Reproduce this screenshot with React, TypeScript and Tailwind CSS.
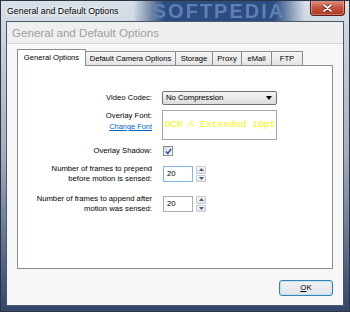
import React from "react";

const F = "font-['Liberation_Sans',Arial,sans-serif]";

function Tab({ label, w, selected }: { label: string; w: number; selected?: boolean }) {
  if (selected) {
    return (
      <div
        className="relative z-10 -mb-px flex h-[17px] items-start justify-center border border-b-0 border-[#898c95] bg-white pt-[3px] text-[7.6px] leading-[10px] text-black"
        style={{ width: w }}
      >
        {label}
      </div>
    );
  }
  return (
    <div
      className="-ml-px flex h-[14px] items-center justify-center border border-b-0 border-[#898c95] bg-gradient-to-b from-[#f6f6f6] to-[#e4e4e4] text-[7.6px] leading-[10px] text-black"
      style={{ width: w }}
    >
      {label}
    </div>
  );
}

function Spinner() {
  return (
    <div className="ml-[3px] flex h-[16px] w-[10px] flex-col gap-px">
      <div className="flex flex-1 items-center justify-center rounded-[1px] border border-[#c5c9d0] bg-gradient-to-b from-[#f7f7f7] to-[#e3e6ea]">
        <svg width="5" height="3" viewBox="0 0 5 3">
          <path d="M2.5 0 L5 3 L0 3 Z" fill="#4a5f7d" />
        </svg>
      </div>
      <div className="flex flex-1 items-center justify-center rounded-[1px] border border-[#c5c9d0] bg-gradient-to-b from-[#f7f7f7] to-[#e3e6ea]">
        <svg width="5" height="3" viewBox="0 0 5 3">
          <path d="M0 0 L5 0 L2.5 3 Z" fill="#4a5f7d" />
        </svg>
      </div>
    </div>
  );
}

export default function App() {
  return (
    <div
      className={`${F} relative flex h-[312px] w-[350px] flex-col overflow-hidden border border-[#2a3446] bg-gradient-to-b from-[#d8e0e8] via-[#a2adbb] to-[#34456a]`}
    >
      {/* Title bar */}
      <div className="relative flex h-[20px] items-start">
        <div className="pointer-events-none absolute left-[132px] top-0 flex h-[20px] w-[172px] items-center justify-center bg-[linear-gradient(to_right,rgba(40,74,126,0),#2d4c80_18%,#2d4c80_82%,rgba(40,74,126,0))]">
          <span className="text-[20px] font-bold leading-[20px] tracking-[2px] text-[#5e80b4] blur-[0.5px]">
            SOFTPEDIA
          </span>
        </div>
        <span className="relative ml-[6px] mt-[5px] text-[8.8px] leading-[11px] text-black [text-shadow:0_0_5px_#ffffff,0_0_3px_#ffffff]">
          General and Default Options
        </span>
        <div className="relative ml-auto mr-[4px] -mt-px flex h-[16px] w-[35px] items-center justify-center rounded-b-[4px] border border-t-0 border-[#5c1a12] bg-gradient-to-b from-[#e0998a] via-[#c4543f] to-[#ab3622] shadow-[inset_0_0_0_1px_rgba(255,200,190,0.45)]">
          <svg width="9" height="8" viewBox="0 0 9 8">
            <path d="M1 1 L8 7 M8 1 L1 7" stroke="#5a1a10" strokeWidth="3" strokeLinecap="round" />
            <path d="M1 1 L8 7 M8 1 L1 7" stroke="#ffffff" strokeWidth="1.7" strokeLinecap="round" />
          </svg>
        </div>
      </div>

      {/* Client area */}
      <div className="mx-[5px] mb-[5px] flex flex-1 flex-col border border-[#4b5869] bg-[#f7f7f7]">
        {/* Header */}
        <div className="flex h-[22px] items-center border-b border-[#d6d6d6] bg-[#efefef] pl-[5px] text-[11.6px] text-[#a0a0a0]">
          General and Default Options
        </div>

        {/* Body */}
        <div className="flex flex-1 flex-col pl-[10px] pr-[10px] pt-[5px]">
          {/* Tabs */}
          <div className="flex h-[16px] items-end">
            <Tab label="General Options" w={69} selected />
            <Tab label="Default Camera Options" w={91} />
            <Tab label="Storage" w={38} />
            <Tab label="Proxy" w={30} />
            <Tab label="eMail" w={31} />
            <Tab label="FTP" w={32} />
          </div>

          {/* Panel */}
          <div className="flex h-[204px] flex-col border border-[#898c95] bg-white pt-[25px] text-[7.7px] leading-[10px] text-black">
            {/* Video Codec */}
            <div className="flex h-[14px] items-center gap-[10px]">
              <div className="w-[134px] text-right">Video Codec:</div>
              <div className="flex h-[14px] w-[115px] items-center justify-between rounded-[2px] border border-[#707070] bg-gradient-to-b from-[#f4f4f4] to-[#dcdcdc] pl-[3px] pr-[4px]">
                <span>No Compression</span>
                <svg width="6" height="4" viewBox="0 0 6 4">
                  <path d="M0 0 L6 0 L3 4 Z" fill="#000" />
                </svg>
              </div>
            </div>

            {/* Overlay Font */}
            <div className="mt-[5px] flex items-start gap-[10px]">
              <div className="flex w-[134px] flex-col items-end pt-px">
                <span>Overlay Font:</span>
                <span className="mt-px cursor-pointer text-[7.4px] text-[#0066cc] underline">Change Font</span>
              </div>
              <div className="flex h-[30px] w-[115px] items-center border border-[#a5a5a5] bg-white pl-[2px]">
                <span className="font-['Liberation_Mono',monospace] text-[9.7px] leading-none text-[#f7f700]">
                  OCR A Extended 10pt
                </span>
              </div>
            </div>

            {/* Overlay Shadow */}
            <div className="mt-[6px] flex h-[10px] items-center gap-[10px]">
              <div className="w-[134px] text-right">Overlay Shadow:</div>
              <div className="ml-px flex h-[10px] w-[10px] items-center justify-center border border-[#8e8f8f] bg-gradient-to-br from-[#dcdcdc] to-[#fafafa]">
                <svg width="7" height="7" viewBox="0 0 7 7">
                  <path d="M1 3.6 L2.8 5.6 L6 1" stroke="#2c4f9c" strokeWidth="1.5" fill="none" />
                </svg>
              </div>
            </div>

            {/* Prepend */}
            <div className="mt-[8px] flex items-center gap-[10px]">
              <div className="w-[134px] text-right">
                Number of frames to prepend
                <br />
                before motion is sensed:
              </div>
              <div className="ml-px flex items-center">
                <div className="flex h-[16px] w-[30px] items-center border border-[#7eb4ea] bg-white pl-[3px]">
                  20
                </div>
                <Spinner />
              </div>
            </div>

            {/* Append */}
            <div className="mt-[10px] flex items-center gap-[10px]">
              <div className="w-[134px] text-right">
                Number of frames to append after
                <br />
                motion was sensed:
              </div>
              <div className="ml-px flex items-center">
                <div className="flex h-[16px] w-[30px] items-center border border-[#abadb3] bg-white pl-[3px]">
                  20
                </div>
                <Spinner />
              </div>
            </div>
          </div>

          {/* Footer */}
          <div className="mt-[11px] flex justify-end">
            <div className="flex h-[16px] w-[54px] items-center justify-center rounded-[3px] border border-[#3c7fb1] bg-gradient-to-b from-[#f3f3f3] to-[#dfe3e8] text-[7.8px] text-black shadow-[inset_0_0_0_1px_#bfe3f7]">
              <span>
                <span className="underline">O</span>K
              </span>
            </div>
          </div>
        </div>
      </div>
    </div>
  );
}
